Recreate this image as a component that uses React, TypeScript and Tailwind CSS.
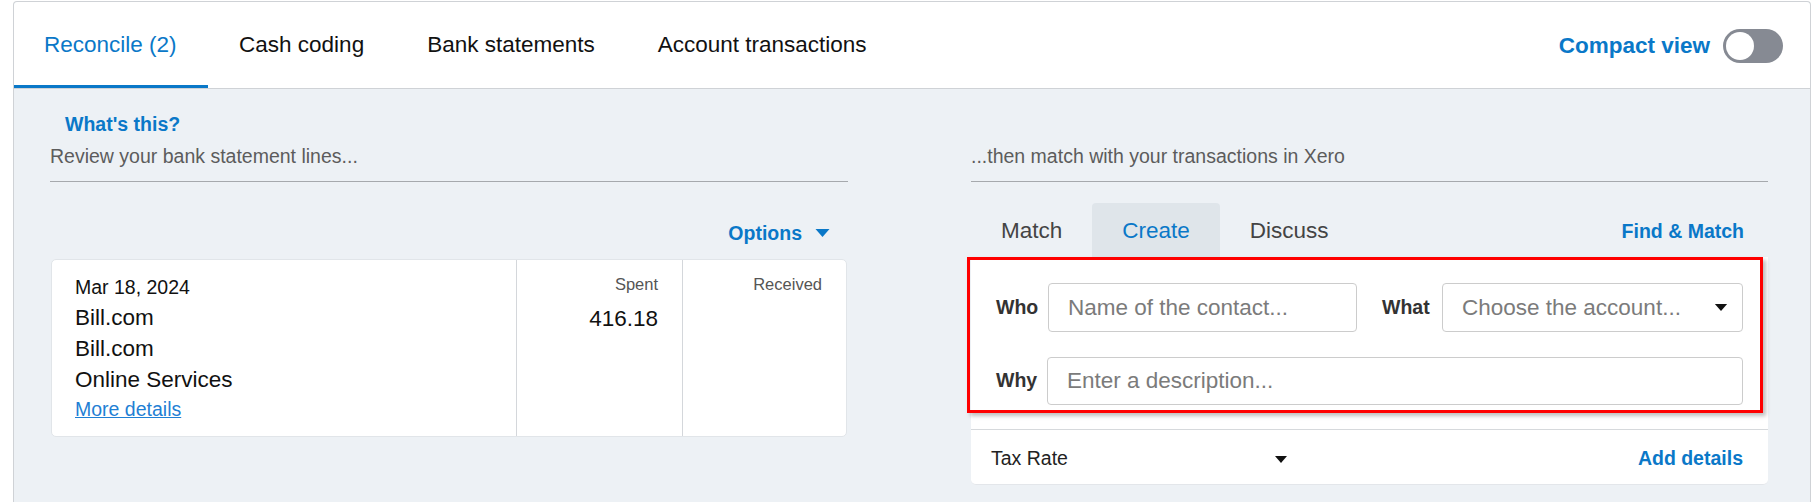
import React from "react";

function Caret({ className }: { className: string }) {
  return (
    <svg className={className} viewBox="0 0 14 8" aria-hidden="true">
      <path d="M0 0 L14 0 L7 8 Z" fill="currentColor" />
    </svg>
  );
}

export default function App() {
  return (
    <div className="h-[502px] w-[1813px] overflow-hidden bg-white pt-px pl-[13px] font-['Liberation_Sans',Arial,sans-serif]">
      <div className="flex h-[520px] w-[1798px] flex-col rounded-t-[4px] border border-b-0 border-[#cfd2d6] bg-[#edf1f5]">
        {/* Top tab bar */}
        <div className="flex h-[87px] items-stretch border-b border-[#cfd2d6] bg-white rounded-t-[4px]">
          <div className="flex items-center border-b-[3px] border-[#0a78c8] pl-[30px] pr-[31px] pt-[3px] text-[22.5px] text-[#0a78c8]">
            Reconcile (2)
          </div>
          <div className="flex items-center px-[31.5px] text-[22.5px] text-[#111]">Cash coding</div>
          <div className="flex items-center px-[31.5px] text-[22.5px] text-[#111]">Bank statements</div>
          <div className="flex items-center px-[31.5px] text-[22.5px] text-[#111]">Account transactions</div>
          <div className="ml-auto flex items-center gap-[13px] pr-[27px] pt-[2px]">
            <span className="text-[22.5px] font-bold text-[#0a78c8]">Compact view</span>
            <div className="flex h-[34px] w-[60px] items-center rounded-full bg-[#868a93] px-[3px]">
              <div className="h-[28px] w-[28px] rounded-full bg-white" />
            </div>
          </div>
        </div>

        {/* Body */}
        <div className="flex gap-[123px] pl-[36px]">
          {/* Left column */}
          <div className="flex w-[798px] flex-col">
            <div className="flex h-[93px] flex-col justify-end border-b border-[#a6a9ad] pb-[13px]">
              <div className="mb-[8px] ml-[15px] text-[19.5px] font-bold leading-[24px] text-[#0a78c8]">
                What's this?
              </div>
              <div className="text-[19.5px] leading-[24px] text-[#5c5c5c]">Review your bank statement lines...</div>
            </div>
            <div className="mt-[39px] flex items-center justify-end gap-[13px] pr-[18px]">
              <span className="text-[19.5px] font-bold leading-[24px] text-[#0a78c8]">Options</span>
              <Caret className="h-[8px] w-[15px] text-[#0a78c8]" />
            </div>
            <div className="mx-px mt-[14px] flex rounded-[5px] border border-[#e1e5e9] bg-white">
              <div className="w-[465px] border-r border-[#d4d7db] pl-[23px] pt-[12px] pb-[13px] text-[#111]">
                <div className="text-[19.5px] leading-[30px]">Mar 18, 2024</div>
                <div className="text-[22.5px] leading-[31px]">Bill.com</div>
                <div className="text-[22.5px] leading-[31px]">Bill.com</div>
                <div className="text-[22.5px] leading-[31px]">Online Services</div>
                <div className="text-[19.5px] leading-[28px] text-[#1f7fd4] underline">More details</div>
              </div>
              <div className="flex w-[166px] flex-col items-end border-r border-[#d4d7db] pr-[24px] pt-[12px]">
                <div className="text-[16.5px] leading-[24px] text-[#555]">Spent</div>
                <div className="mt-[7px] text-[22.5px] leading-[31px] text-[#111]">416.18</div>
              </div>
              <div className="flex flex-1 flex-col items-end pr-[24px] pt-[12px]">
                <div className="text-[16.5px] leading-[24px] text-[#555]">Received</div>
              </div>
            </div>
          </div>

          {/* Right column */}
          <div className="flex w-[797px] flex-col">
            <div className="flex h-[93px] flex-col justify-end border-b border-[#a6a9ad] pb-[13px]">
              <div className="text-[19.5px] leading-[24px] text-[#5c5c5c]">...then match with your transactions in Xero</div>
            </div>
            <div className="mt-[21px] flex h-[54px] items-center">
              <div className="flex h-full items-center px-[30px] pt-[2px] text-[22.5px] text-[#444]">Match</div>
              <div className="flex h-full items-center rounded-t-[4px] bg-[#dfe5ea] px-[30px] pt-[2px] text-[22.5px] text-[#0a78c8]">
                Create
              </div>
              <div className="flex h-full items-center px-[30px] pt-[2px] text-[22.5px] text-[#444]">Discuss</div>
              <div className="ml-auto pr-[24px] pt-[3px] text-[19.5px] font-bold text-[#0a78c8]">Find &amp; Match</div>
            </div>
            <div className="relative rounded-b-[5px] border-b border-[#e3e6ea] bg-white">
              <div className="flex flex-col gap-[25px] px-[25px] pt-[26px] pb-[24px]">
                <div className="flex items-center">
                  <div className="w-[52px] text-[19.5px] font-bold text-[#333]">Who</div>
                  <input
                    className="h-[49px] w-[309px] rounded-[4px] border border-[#cccccc] px-[19px] text-[22.5px] outline-none placeholder:text-[#7b7b7b]"
                    placeholder="Name of the contact..."
                  />
                  <div className="ml-[25px] w-[60px] text-[19.5px] font-bold text-[#333]">What</div>
                  <div className="flex h-[49px] flex-1 items-center rounded-[4px] border border-[#cccccc] pl-[19px] pr-[14px]">
                    <span className="text-[22.5px] text-[#7b7b7b]">Choose the account...</span>
                    <Caret className="ml-auto h-[7px] w-[14px] text-[#111]" />
                  </div>
                </div>
                <div className="flex items-center">
                  <div className="w-[51px] text-[19.5px] font-bold text-[#333]">Why</div>
                  <input
                    className="h-[48px] flex-1 rounded-[4px] border border-[#cccccc] px-[19px] text-[22.5px] outline-none placeholder:text-[#7b7b7b]"
                    placeholder="Enter a description..."
                  />
                </div>
              </div>
              <div className="flex h-[55px] items-center border-t border-[#d6d9dc] pl-[20px] pr-[25px] pt-[4px]">
                <div className="flex w-[296px] items-center">
                  <span className="text-[19.5px] text-[#222]">Tax Rate</span>
                  <Caret className="ml-auto h-[7px] w-[12px] text-[#111]" />
                </div>
                <span className="ml-auto text-[19.5px] font-bold text-[#0a78c8]">Add details</span>
              </div>
              <div className="pointer-events-none absolute left-[-4px] top-0 h-[156px] w-[796px] border-[3px] border-[#ff0000] shadow-[3px_3px_4px_rgba(0,0,0,0.25)]" />
            </div>
          </div>
        </div>
      </div>
    </div>
  );
}
